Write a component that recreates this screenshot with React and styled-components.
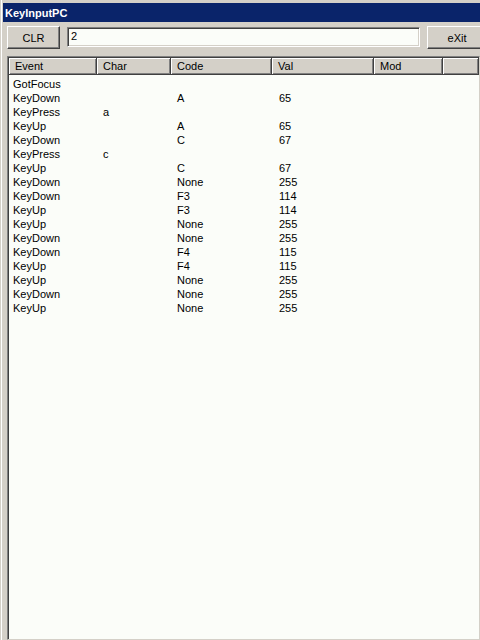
import React from "react";
import styled, { createGlobalStyle } from "styled-components";

const GlobalStyle = createGlobalStyle`
  html, body {
    margin: 0;
    padding: 0;
    background: #d4d0c8;
  }
  body {
    font-family: "Liberation Sans", Arial, sans-serif;
    font-size: 11px;
    color: #000;
  }
`;

const columns = [
  { label: "Event", width: 88, pad: 4 },
  { label: "Char", width: 74, pad: 6 },
  { label: "Code", width: 101, pad: 6 },
  { label: "Val", width: 102, pad: 7 },
  { label: "Mod", width: 69, pad: 6 },
];

const rows = [
  ["GotFocus", "", "", ""],
  ["KeyDown", "", "A", "65"],
  ["KeyPress", "a", "", ""],
  ["KeyUp", "", "A", "65"],
  ["KeyDown", "", "C", "67"],
  ["KeyPress", "c", "", ""],
  ["KeyUp", "", "C", "67"],
  ["KeyDown", "", "None", "255"],
  ["KeyDown", "", "F3", "114"],
  ["KeyUp", "", "F3", "114"],
  ["KeyUp", "", "None", "255"],
  ["KeyDown", "", "None", "255"],
  ["KeyDown", "", "F4", "115"],
  ["KeyUp", "", "F4", "115"],
  ["KeyUp", "", "None", "255"],
  ["KeyDown", "", "None", "255"],
  ["KeyUp", "", "None", "255"],
];

const App = () => {
  return (
    <>
      <GlobalStyle />
      <Window>
        <TitleBar>KeyInputPC</TitleBar>
        <Toolbar>
          <Button $width={53}>CLR</Button>
          <TextBox>2</TextBox>
          <Button $width={60}>eXit</Button>
        </Toolbar>
        <ListView>
          <Header>
            {columns.map((c) => (
              <HeadCell key={c.label} $width={c.width}>
                {c.label}
              </HeadCell>
            ))}
            <HeadFill />
          </Header>
          <Body>
            {rows.map((r, i) => (
              <Row key={i}>
                {r.map((v, j) => (
                  <Cell key={j} $width={columns[j].width} $pad={columns[j].pad}>
                    {v}
                  </Cell>
                ))}
              </Row>
            ))}
          </Body>
        </ListView>
      </Window>
    </>
  );
};

const Window = styled.div`
  width: 480px;
  height: 640px;
  box-sizing: border-box;
  padding: 3px 0 0 3px;
  background: #d4d0c8;
  box-shadow: inset 1px 0 0 #d4d0c8, inset 2px 0 0 #ffffff;
  display: flex;
  flex-direction: column;
  overflow: hidden;
`;

const TitleBar = styled.div`
  height: 19px;
  background: #0a246a;
  color: #ffffff;
  font-weight: 700;
  font-size: 11px;
  line-height: 20px;
  padding-left: 2px;
  flex-shrink: 0;
`;

const Toolbar = styled.div`
  display: flex;
  align-items: flex-start;
  margin-top: 4px;
  padding-left: 4px;
  flex-shrink: 0;
`;

const Button = styled.div`
  width: ${(p) => p.$width}px;
  height: 23px;
  box-sizing: border-box;
  flex-shrink: 0;
  background: #d4d0c8;
  border-top: 1px solid #ffffff;
  border-left: 1px solid #ffffff;
  border-right: 1px solid #404040;
  border-bottom: 1px solid #404040;
  box-shadow: inset -1px -1px 0 #808080;
  display: flex;
  align-items: center;
  justify-content: center;
  font-size: 11px;
`;

const TextBox = styled.div`
  width: 353px;
  height: 20px;
  box-sizing: border-box;
  margin: 1px 7px 0 7px;
  background: #fbfdf9;
  border-top: 1px solid #808080;
  border-left: 1px solid #808080;
  border-right: 1px solid #ffffff;
  border-bottom: 1px solid #ffffff;
  box-shadow: inset 1px 1px 0 #404040, inset -1px -1px 0 #d4d0c8;
  padding-left: 3px;
  line-height: 17px;
  flex-shrink: 0;
`;

const ListView = styled.div`
  flex: 1;
  margin: 7px 0 0 4px;
  box-sizing: border-box;
  background: #fbfdf9;
  border-top: 1px solid #808080;
  border-left: 1px solid #808080;
  border-right: 1px solid #d4d0c8;
  border-bottom: 1px solid #d4d0c8;
  box-shadow: inset 1px 1px 0 #404040;
  padding: 1px 0 0 1px;
  display: flex;
  flex-direction: column;
`;

const Header = styled.div`
  display: flex;
  height: 17px;
  flex-shrink: 0;
`;

const HeadCell = styled.div`
  width: ${(p) => p.$width}px;
  box-sizing: border-box;
  flex-shrink: 0;
  background: #d4d0c8;
  border-right: 1px solid #404040;
  border-bottom: 1px solid #404040;
  box-shadow: inset 1px 1px 0 #ffffff, inset -1px -1px 0 #808080;
  padding-left: 6px;
  line-height: 16px;
`;

const HeadFill = styled(HeadCell)`
  flex: 1;
`;

const Body = styled.div`
  padding-top: 2px;
`;

const Row = styled.div`
  display: flex;
  height: 14px;
  line-height: 14px;
`;

const Cell = styled.div`
  width: ${(p) => p.$width}px;
  box-sizing: border-box;
  flex-shrink: 0;
  padding-left: ${(p) => p.$pad}px;
  white-space: nowrap;
`;

export default App;
